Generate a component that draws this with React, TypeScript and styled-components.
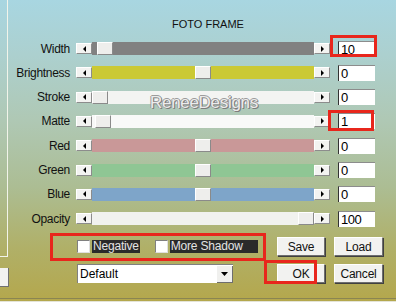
import styled, { createGlobalStyle } from "styled-components";

const GlobalStyle = createGlobalStyle`
  body {
    margin: 0;
    font-family: "Liberation Sans", Arial, sans-serif;
  }
`;

const Frame = styled.div`
  position: relative;
  width: 396px;
  height: 302px;
  overflow: hidden;
  display: flex;
  flex-direction: column;
  background: linear-gradient(
    180deg,
    #a8d6e1 0%,
    #acd0cf 18%,
    #afc8b4 40%,
    #acbd93 62%,
    #b0b068 82%,
    #b4a74c 100%
  );
`;

const Body = styled.div`
  flex: 1;
  display: flex;
`;

const LeftColumn = styled.div`
  width: 9px;
  display: flex;
  flex-direction: column;
`;

const LeftPanel = styled.div`
  width: 7px;
  height: 256px;
  border-right: 1px solid #f2f4ea;
  border-bottom: 1px solid #f2f4ea;
`;

const LeftButton = styled.div`
  margin-top: 11px;
  width: 8px;
  height: 18px;
  background: #f2f2f0;
  border-right: 1px solid #707070;
  border-bottom: 1px solid #707070;
`;

const Main = styled.div`
  flex: 1;
  padding-top: 18px;
  display: flex;
  flex-direction: column;
`;

const Title = styled.div`
  padding-left: 11px;
  text-align: center;
  font-size: 11px;
  line-height: 13px;
  color: #111;
`;

const RowList = styled.div`
  margin-top: 5.4px;
  display: flex;
  flex-direction: column;
`;

const Row = styled.div`
  height: 24.3px;
  display: flex;
  align-items: center;
`;

const Label = styled.div`
  width: 61px;
  text-align: right;
  font-size: 12px;
  letter-spacing: -0.3px;
  color: #111;
`;

const Slider = styled.div`
  margin-left: 6px;
  width: 254px;
  height: 13px;
  display: flex;
  align-items: center;
`;

const ArrowButton = styled.div`
  width: 16px;
  height: 11px;
  box-sizing: border-box;
  display: flex;
  align-items: center;
  justify-content: center;
  background: #f3f3f1;
  border-top: 1px solid #ffffff;
  border-left: 1px solid #ffffff;
  border-right: 1px solid #8c8c8c;
  border-bottom: 1px solid #8c8c8c;
`;

const Track = styled.div<{ $color: string }>`
  position: relative;
  flex: 1;
  height: 13px;
  background: ${(p) => p.$color};
`;

const Thumb = styled.div`
  position: absolute;
  top: 0;
  width: 16px;
  height: 13px;
  box-sizing: border-box;
  background: #eeeeec;
  border-top: 1px solid #ffffff;
  border-left: 1px solid #ffffff;
  border-right: 1px solid #8a8a8a;
  border-bottom: 1px solid #8a8a8a;
`;

const ValueBox = styled.div`
  margin-left: 8px;
  width: 37px;
  height: 16px;
  box-sizing: border-box;
  background: #ffffff;
  border-top: 1px solid #8c8c8c;
  border-left: 1px solid #333;
  padding-left: 2px;
  font-size: 13px;
  line-height: 15px;
  letter-spacing: -0.5px;
  color: #000;
`;

const Watermark = styled.div`
  position: absolute;
  left: 150px;
  top: 93px;
  font-size: 17px;
  letter-spacing: -0.3px;
  color: #ececec;
  text-shadow: 1px 1px 0 #7c7c7c, -1px 0 0 #9c9c9c, 0 -1px 0 #9c9c9c,
    1px 0 0 #8a8a8a;
`;

const Controls = styled.div`
  margin-top: 6.3px;
  padding-left: 68px;
  display: grid;
  grid-template-columns: 191px 48px 49px;
  grid-template-rows: 19px 19px;
  column-gap: 9px;
  row-gap: 8px;
  font-size: 11px;
`;

const CheckGroup = styled.div`
  display: flex;
  align-items: center;
`;

const CheckBox = styled.div`
  width: 13px;
  height: 13px;
  box-sizing: border-box;
  background: #ffffff;
  border-top: 1px solid #808080;
  border-left: 1px solid #808080;
  border-right: 1px solid #e0e0e0;
  border-bottom: 1px solid #e0e0e0;
`;

const CheckLabel = styled.div<{ $gap: number; $width?: number }>`
  margin-left: 2px;
  margin-right: ${(p) => p.$gap}px;
  width: ${(p) => (p.$width ? `${p.$width}px` : "auto")};
  height: 13px;
  padding: 0 1px;
  background: #2a2a2a;
  color: #e4e4e4;
  font-size: 12px;
  line-height: 13px;
  letter-spacing: -0.2px;
  white-space: nowrap;
`;

const Button = styled.div`
  box-sizing: border-box;
  display: flex;
  align-items: center;
  justify-content: center;
  background: #f2f2f0;
  border-top: 1px solid #ffffff;
  border-left: 1px solid #ffffff;
  border-right: 1px solid #6e6e6e;
  border-bottom: 1px solid #6e6e6e;
  box-shadow: 1px 1px 0 #404040;
  font-size: 12px;
  letter-spacing: -0.2px;
  color: #111;
`;

const Select = styled.div`
  width: 156px;
  height: 19px;
  box-sizing: border-box;
  display: flex;
  align-items: center;
  background: #ffffff;
  border-top: 1px solid #808080;
  border-left: 1px solid #808080;
  font-size: 12px;
  color: #000;
`;

const SelectText = styled.div`
  flex: 1;
  padding-left: 2px;
`;

const SelectArrow = styled.div`
  width: 16px;
  height: 17px;
  box-sizing: border-box;
  display: flex;
  align-items: center;
  justify-content: center;
  background: #f0f0ee;
  border-right: 1px solid #6e6e6e;
  border-bottom: 1px solid #6e6e6e;
`;

const BottomEdge = styled.div`
  height: 4px;
  border-top: 1px solid #8a8552;
  border-bottom: 1px solid #e4e4d8;
  box-sizing: border-box;
`;

const Mark = styled.div<{ $x: number; $y: number; $w: number; $h: number }>`
  position: absolute;
  left: ${(p) => p.$x}px;
  top: ${(p) => p.$y}px;
  width: ${(p) => p.$w}px;
  height: ${(p) => p.$h}px;
  box-sizing: border-box;
  border: 3px solid #e8261c;
`;

const Tri = ({ dir }: { dir: "left" | "right" | "down" }) => {
  const pts =
    dir === "left" ? "4,0 4,6 1,3" : dir === "right" ? "1,0 1,6 4,3" : "0,1 7,1 3.5,5";
  const w = dir === "down" ? 7 : 5;
  return (
    <svg width={w} height={6} viewBox={`0 0 ${w} 6`}>
      <polygon points={pts} fill="#000" />
    </svg>
  );
};

const rows = [
  { label: "Width", value: 10, min: 0, max: 400, color: "#818181" },
  { label: "Brightness", value: 0, min: -100, max: 100, color: "#cbc934" },
  { label: "Stroke", value: 0, min: 0, max: 100, color: "#f3f4f2" },
  { label: "Matte", value: 1, min: 0, max: 64, color: "#f8f9f8" },
  { label: "Red", value: 0, min: -255, max: 255, color: "#c99898" },
  { label: "Green", value: 0, min: -255, max: 255, color: "#8fc694" },
  { label: "Blue", value: 0, min: -255, max: 255, color: "#7ea5c9" },
  { label: "Opacity", value: 100, min: 0, max: 100, color: "#f1f2ef" },
];

const App = () => {
  return (
    <Frame>
      <GlobalStyle />
      <Body>
        <LeftColumn>
          <LeftPanel />
          <LeftButton />
        </LeftColumn>
        <Main>
          <Title>FOTO FRAME</Title>
          <RowList>
            {rows.map((r) => (
              <Row key={r.label}>
                <Label>{r.label}</Label>
                <Slider>
                  <ArrowButton>
                    <Tri dir="left" />
                  </ArrowButton>
                  <Track $color={r.color}>
                    <Thumb
                      style={{ left: ((r.value - r.min) / (r.max - r.min)) * 206 }}
                    />
                  </Track>
                  <ArrowButton>
                    <Tri dir="right" />
                  </ArrowButton>
                </Slider>
                <ValueBox>{r.value}</ValueBox>
              </Row>
            ))}
          </RowList>
          <Controls>
            <CheckGroup>
              <CheckBox />
              <CheckLabel $gap={15}>Negative</CheckLabel>
              <CheckBox />
              <CheckLabel $gap={0} $width={86}>More Shadow</CheckLabel>
            </CheckGroup>
            <Button>Save</Button>
            <Button>Load</Button>
            <Select>
              <SelectText>Default</SelectText>
              <SelectArrow>
                <Tri dir="down" />
              </SelectArrow>
            </Select>
            <Button>OK</Button>
            <Button>Cancel</Button>
          </Controls>
        </Main>
      </Body>
      <BottomEdge />
      <Watermark>ReneeDesigns</Watermark>
      <Mark $x={330} $y={35} $w={47} $h={22} />
      <Mark $x={328} $y={110} $w={46} $h={21} />
      <Mark $x={50} $y={233} $w={216} $h={28} />
      <Mark $x={264} $y={260} $w={53} $h={24} />
    </Frame>
  );
};

export default App;
